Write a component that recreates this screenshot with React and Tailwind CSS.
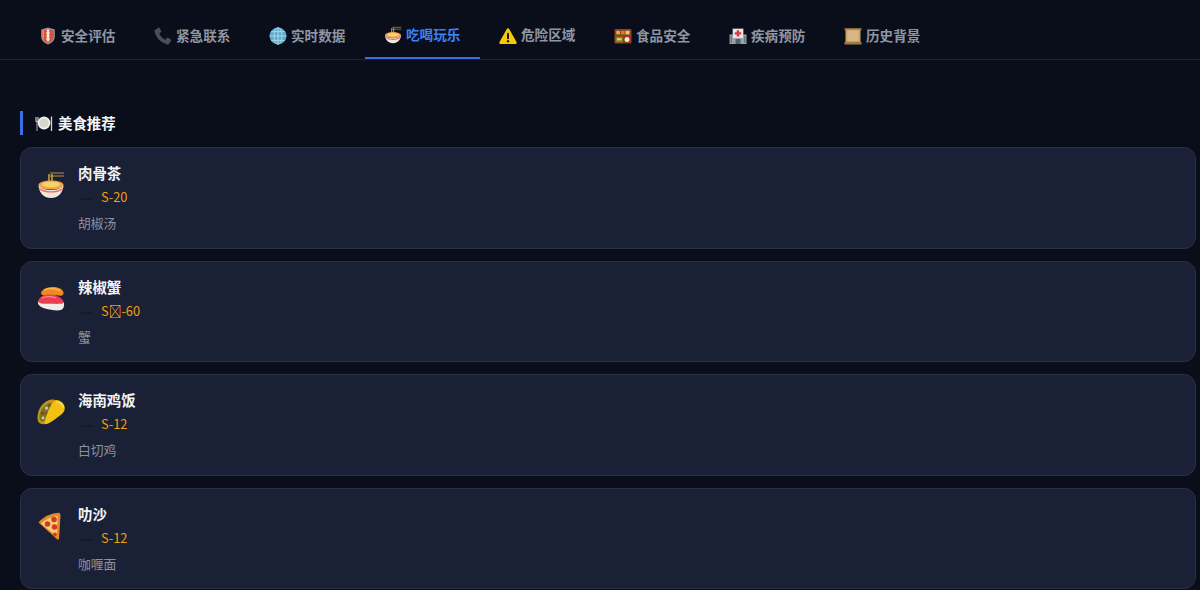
const FONT = "font-['Noto_Sans_CJK_SC','Noto_Sans',sans-serif]";

function Shield({ className }) {
  return (
    <svg viewBox="0 0 18 18" className={className}>
      <path d="M2.200 2.600 9 .6l6.800 2v7.200c0 3.600-3.200 6.400-6.800 7.800-3.600-1.400-6.800-4.200-6.800-7.800z" fill="#8f98a3" />
      <path d="M3.300 3.400 9 1.800l5.700 1.600v6.400c0 3-2.800 5.300-5.700 6.500-2.900-1.200-5.700-3.500-5.700-6.500z" fill="#d8503f" />
      <path d="M7.300 2.600h3.400l-.8 1.800 1 1.500-1 1.500 1 1.500-1 1.500 1 1.500-1.900 3.300-1.900-3.300 1-1.500-1-1.500 1-1.500-1-1.500 1-1.500z" fill="#efe9df" />
      <path d="M3.300 3.400 5 3v9.700c-1-.8-1.700-1.800-1.700-2.900z" fill="#ee8a52" />
    </svg>
  );
}

function Phone({ className }) {
  return (
    <svg viewBox="0 0 18 18" className={className}>
      <path d="M1.200 2.800 4.300.7c.5-.3 1-.2 1.300.3l1.600 2.900c.2.500.1 1-.3 1.300L5.300 6.300c.8 2.800 3.500 5.600 6.300 6.400l1.100-1.600c.3-.4.800-.5 1.300-.3l2.900 1.600c.5.300.6.800.3 1.300l-2.100 3.100c-.4.500-1.100.8-1.800.6C6.800 15.900 2.100 11.200.6 4.600c-.2-.7.100-1.400.6-1.800z" fill="#4b4d50" />
    </svg>
  );
}

function Globe({ className }) {
  return (
    <svg viewBox="0 0 18 18" className={className}>
      <circle cx="9" cy="9" r="8.500" fill="#58a9cc" />
      <g fill="none" stroke="#bfe3ee" strokeWidth=".8">
        <ellipse cx="9" cy="9" rx="4" ry="8.300" />
        <path d="M9 .6v16.800M.6 9h16.800M2 4.700h14M2 13.300h14" />
      </g>
    </svg>
  );
}

function Bowl({ className }) {
  return (
    <svg viewBox="0 0 28 28" className={className}>
      <path d="M13 2h14M13 5h14" stroke="#8b6b3a" strokeWidth="1.500" />
      <path d="M12 3v10M15 3v10" stroke="#c9a93e" strokeWidth="1.500" />
      <ellipse cx="14" cy="14" rx="12.500" ry="4.500" fill="#f4a54a" />
      <ellipse cx="14" cy="13.500" rx="9" ry="2.700" fill="#f6d36a" />
      <path d="M1.500 14.500C2 21 6 27 14 27s12-6 12.500-12.500C23 18 19 19 14 19s-9-1-12.500-4.500z" fill="#efe6dc" />
      <path d="M2 16.500c3 2.500 7 3.700 12 3.700s9-1.200 12-3.700l-.6 2.200c-3 1.900-7 2.900-11.400 2.900s-8.400-1-11.400-2.900z" fill="#e86f5e" />
    </svg>
  );
}

function Warning({ className }) {
  return (
    <svg viewBox="0 0 18 18" className={className}>
      <path d="M9 1.200c.5 0 .9.300 1.200.8l7.300 13c.5.900-.1 2-1.200 2H1.700c-1.100 0-1.700-1.100-1.200-2l7.300-13c.3-.5.700-.8 1.200-.8z" fill="#f7c708" />
      <rect x="8" y="5.800" width="2" height="6.400" rx="1" fill="#1a1a1a" />
      <circle cx="9" cy="14.200" r="1.200" fill="#1a1a1a" />
    </svg>
  );
}

function Bento({ className }) {
  return (
    <svg viewBox="0 0 18 18" className={className}>
      <rect x=".5" y="2" width="17" height="14.500" rx="1" fill="#a5371f" />
      <rect x="1.700" y="3.200" width="14.600" height="5.800" fill="#7a4a20" />
      <rect x="2.300" y="3.800" width="3.600" height="3.600" fill="#f0ac3c" />
      <rect x="6.800" y="3.800" width="3.800" height="3.600" fill="#e8703a" />
      <rect x="11.500" y="3.800" width="4" height="3.600" fill="#efcb5c" />
      <rect x="1.700" y="9.800" width="7" height="5.500" fill="#6d8f30" />
      <rect x="3" y="11.300" width="4.500" height="2" fill="#e9d766" />
      <rect x="9.700" y="9.800" width="6.600" height="5.500" fill="#6b4420" />
      <circle cx="13" cy="12.500" r="2.500" fill="#f0eadd" />
    </svg>
  );
}

function Hospital({ className }) {
  return (
    <svg viewBox="0 0 18 18" className={className}>
      <path d="M3.500 1.500h11v6h3V17H.5V7.500h3z" fill="#9aa3a8" />
      <rect x="4" y="2" width="10" height="9" fill="#e9e5e1" />
      <path d="M7.800 3.200h2.400v2h2v2.400h-2v2H7.800v-2h-2V5.200h2z" fill="#d93a45" />
      <rect x="6.500" y="12" width="5" height="5" fill="#55606a" />
      <path d="M1.500 9h1.500v7H1.500zM15 9h1.500v7H15z" fill="#6d777f" />
    </svg>
  );
}

function Scroll({ className }) {
  return (
    <svg viewBox="0 0 18 18" className={className}>
      <rect x=".5" y="1" width="17" height="2.500" rx=".6" fill="#8a6a3c" />
      <rect x="1.500" y="2.500" width="15" height="13" fill="#caa26a" />
      <rect x="3.500" y="3.500" width="11" height="11" fill="#d9b785" />
      <rect x=".5" y="14.800" width="17" height="2.700" rx=".6" fill="#a07a45" />
    </svg>
  );
}

function Plate({ className }) {
  return (
    <svg viewBox="0 0 18 18" className={className}>
      <circle cx="9" cy="9" r="6.400" fill="#f0f0ec" />
      <circle cx="9" cy="9" r="4.600" fill="#d6d6d0" />
      <path d="M.8 3v4.500M2 3v14M3.200 3v4.500M.8 7.500h2.400" stroke="#d8d8d4" strokeWidth=".8" fill="none" />
      <path d="M16.500 2.500V17" stroke="#d8d8d4" strokeWidth="1.300" />
    </svg>
  );
}

function Sushi({ className }) {
  return (
    <svg viewBox="0 0 28 28" className={className}>
      <path d="M4.500 6.500C7 3 12 1.500 17.500 2c5 .5 8.500 2.500 9 5.500.3 2-1 3.500-3.500 3.200C18 9.500 11 11 7 10.500 4.500 10.200 3.300 8.300 4.500 6.500z" fill="#f08a1e" />
      <path d="M7 5c4-1.800 11-2 16 .8" stroke="#f9bd62" strokeWidth="1.200" fill="none" />
      <path d="M1 16.500C2 12 7 9.500 13 9.500c6 0 12.500 3 14 8-3 2.500-8 1.500-13 1.500S4 20 1 16.500z" fill="#ea3f52" />
      <path d="M5 13c3-1.500 9-2 14 0" stroke="#f68a95" strokeWidth="1.200" fill="none" />
      <path d="M1 16.500c-.5 3 2 5.500 7 7 5 1.500 12 2.500 16 1.500 2.500-.7 3.500-4 3-7.500-3 2-8 1.300-13 1.300s-10 .7-13-2.300z" fill="#f1ede6" />
    </svg>
  );
}

function Taco({ className }) {
  return (
    <svg viewBox="0 0 28 28" className={className}>
      <path d="M.5 20.500C.2 11 6 3 14.500 1.500c2.500-.3 4 .5 4.500 1.500L8 26c-4.500 1-7.300-1.500-7.500-5.500z" fill="#c8921a" />
      <path d="M2.500 20c-.2-6.500 3.500-12.500 9.500-15 2.500-.8 3.500 1 2.500 3L8 22.500c-2.500 2-5.300.5-5.500-2.500z" fill="#6f7a28" />
      <circle cx="5.500" cy="15" r="1.600" fill="#8f3b22" />
      <circle cx="9.500" cy="10" r="1.600" fill="#d2cba8" />
      <circle cx="6" cy="20" r="1.400" fill="#d2cba8" />
      <circle cx="10" cy="15.500" r="1.400" fill="#8f3b22" />
      <circle cx="12.500" cy="7.500" r="1.200" fill="#8f3b22" />
      <path d="M18.500 2.200C23 1.500 27.600 5.500 27.800 10c.1 3-2 5.500-4.800 7.500-4.500 3.500-9 7-13 8.500-2 .5-2.800-.8-2.300-2.600C10 15 13.500 5.500 18.500 2.200z" fill="#f2c114" />
      <path d="M19.500 4c3.800 0 6.800 2.800 6.800 6" stroke="#fbe26a" strokeWidth="1.200" fill="none" />
    </svg>
  );
}

function Pizza({ className }) {
  return (
    <svg viewBox="0 0 28 28" className={className}>
      <path d="M1.500 10.500C6 5 14 1 22.500 .8l1 2.200L22 26.500c-.1 1.200-1.200 1.500-2 .8z" fill="#e8862a" />
      <path d="M4 11.500C9 7 15 4.500 20.500 4L20 24.500z" fill="#f6cf7a" />
      <circle cx="17" cy="7.500" r="2.800" fill="#d43a24" />
      <circle cx="10.500" cy="12" r="2.800" fill="#d43a24" />
      <circle cx="17.500" cy="15" r="2.800" fill="#d43a24" />
      <circle cx="18" cy="22.500" r="2" fill="#d43a24" />
    </svg>
  );
}

const tabs = [
  { Icon: Shield, label: "安全评估" },
  { Icon: Phone, label: "紧急联系" },
  { Icon: Globe, label: "实时数据" },
  { Icon: Bowl, label: "吃喝玩乐", active: true },
  { Icon: Warning, label: "危险区域", raised: true },
  { Icon: Bento, label: "食品安全" },
  { Icon: Hospital, label: "疾病预防" },
  { Icon: Scroll, label: "历史背景" },
];

const foods = [
  { Icon: Bowl, name: "肉骨茶", price: "S-20", desc: "胡椒汤" },
  { Icon: Sushi, name: "辣椒蟹", price: "S\u{10FFFD}-60", desc: "蟹" },
  { Icon: Taco, name: "海南鸡饭", price: "S-12", desc: "白切鸡" },
  { Icon: Pizza, name: "叻沙", price: "S-12", desc: "咖喱面" },
];

export default function App() {
  return (
    <div className={`h-[590px] overflow-hidden bg-[#0a0e1a] ${FONT}`}>
      <nav className="flex h-[60px] items-end border-b border-[#1c2233] pl-[20px]">
        {tabs.map(({ Icon, label, active, raised }) => (
          <div
            key={label}
            className={`flex h-[60px] w-[115px] items-center gap-[4px] pl-[19px] pt-[13px] text-[13.6px] font-semibold ${
              active ? "border-b-2 border-[#3b6fe0] text-[#3b82f6]" : "text-[#8f96a3]"
            }`}
          >
            <Icon className="h-[18px] w-[18px] shrink-0" />
            <span className={raised ? "-mt-[2px]" : ""}>{label}</span>
          </div>
        ))}
      </nav>
      <main className="pl-[20px] pr-[4px] pt-[51px]">
        <h2 className="mb-[12px] flex h-[24px] items-center gap-[5px] border-l-[3px] border-[#3b6fe0] pl-[12px] text-[14.4px] font-bold leading-[22px] text-[#f3f4f6]">
          <Plate className="h-[18px] w-[18px] shrink-0" />
          <span className="-mt-[1px]">美食推荐</span>
        </h2>
        <div className="flex flex-col gap-[12px]">
          {foods.map(({ Icon, name, price, desc }) => (
            <section
              key={name}
              className="flex h-[101.6px] gap-[13px] rounded-[12px] border border-[#2a3145] bg-[#1a2036] pl-[16px] pt-[15px]"
            >
              <Icon className="mt-[8px] h-[28px] w-[28px] shrink-0" />
              <div className="flex flex-col">
                <div className="text-[14.4px] font-bold leading-[20px] text-[#f3f4f6]">{name}</div>
                <div className="mt-[4px] flex items-center gap-[7px] text-[12.8px] leading-[20px] text-[#f59e0b]">
                  <span className="w-[16px] text-[16px] font-bold leading-[20px] text-[#131829]">—</span>
                  <span>{price}</span>
                </div>
                <div className="mt-[6px] text-[12.8px] leading-[20px] text-[#8a91a0]">{desc}</div>
              </div>
            </section>
          ))}
        </div>
      </main>
    </div>
  );
}
